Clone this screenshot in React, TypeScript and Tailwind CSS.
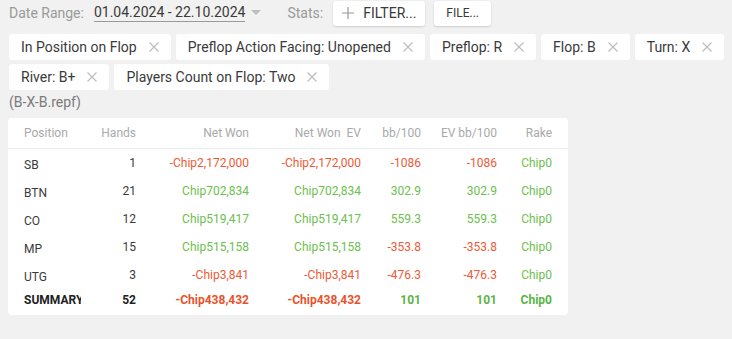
import React from 'react';

const chips = [
  ['In Position on Flop', 'Preflop Action Facing: Unopened', 'Preflop: R', 'Flop: B', 'Turn: X'],
  ['River: B+', 'Players Count on Flop: Two'],
];

type Row = {
  pos: string;
  hands: string;
  net: string;
  ev: string;
  bb: string;
  evbb: string;
};

const rows: Row[] = [
  { pos: 'SB', hands: '1', net: '-Chip2,172,000', ev: '-Chip2,172,000', bb: '-1086', evbb: '-1086' },
  { pos: 'BTN', hands: '21', net: 'Chip702,834', ev: 'Chip702,834', bb: '302.9', evbb: '302.9' },
  { pos: 'CO', hands: '12', net: 'Chip519,417', ev: 'Chip519,417', bb: '559.3', evbb: '559.3' },
  { pos: 'MP', hands: '15', net: 'Chip515,158', ev: 'Chip515,158', bb: '-353.8', evbb: '-353.8' },
  { pos: 'UTG', hands: '3', net: '-Chip3,841', ev: '-Chip3,841', bb: '-476.3', evbb: '-476.3' },
];

const tone = (v: string) => (v.startsWith('-') ? 'text-[#ee5a36]' : 'text-[#6cc04e]');

function Chip({ label }: { label: string }) {
  return (
    <div className="flex h-[26px] items-center gap-[12px] rounded-[3px] bg-white pl-[12px] pr-[12px] text-[14px] text-[#3a3a3a]">
      <span>{label}</span>
      <svg width="10" height="10" viewBox="0 0 10 10" className="text-[#bdbdbd]">
        <path d="M0.5 0.5L9.5 9.5M9.5 0.5L0.5 9.5" stroke="currentColor" strokeWidth="1.2" />
      </svg>
    </div>
  );
}

export default function App() {
  const cols = 'grid grid-cols-[57px_55px_113px_112px_60px_76px_55px]';
  return (
    <div className="min-h-[339px] w-[732px] bg-[#f1f1f1] pl-[9px] font-['Roboto',sans-serif]">
      <div className="flex h-[26px] items-center text-[14px]">
        <span className="text-[#9a9a9a]">Date Range:</span>
        <span className="ml-[10px] border-b border-[#9a9a9a] leading-[17px] text-[#3a3a3a]">01.04.2024 - 22.10.2024</span>
        <svg width="10" height="6" viewBox="0 0 10 6" className="ml-[6px] text-[#bdbdbd]">
          <path d="M0 0H10L5 5Z" fill="currentColor" />
        </svg>
        <span className="ml-[26px] text-[#9a9a9a]">Stats:</span>
        <button className="ml-[10px] flex h-[25px] items-center gap-[9px] rounded-[3px] bg-white px-[9px] text-[14px] text-[#3a3a3a] shadow-[0_1px_2px_rgba(0,0,0,0.15)]">
          <svg width="12" height="12" viewBox="0 0 12 12" className="text-[#9a9a9a]">
            <path d="M6 0V12M0 6H12" stroke="currentColor" strokeWidth="1.2" />
          </svg>
          FILTER...
        </button>
        <button className="ml-[9px] flex h-[25px] items-center rounded-[3px] bg-white px-[12px] text-[12px] text-[#3a3a3a] shadow-[0_1px_2px_rgba(0,0,0,0.15)]">
          FILE...
        </button>
      </div>
      <div className="mt-[8px] flex flex-col gap-[4px]">
        {chips.map((line, i) => (
          <div key={i} className="flex gap-[5px]">
            {line.map((c) => (
              <Chip key={c} label={c} />
            ))}
          </div>
        ))}
      </div>
      <div className="mt-[2px] text-[14px] leading-[20px] text-[#7a7a7a]">(B-X-B.repf)</div>
      <div className="-ml-[1px] mt-[6px] w-[560px] rounded-[4px] bg-white pb-[4px] text-[12px]">
        <div className={`${cols} h-[31px] items-center border-b border-[#ececec] px-[16px] text-[#a9a9a9]`}>
          <span className="whitespace-nowrap">Position</span>
          <span className="text-right">Hands</span>
          <span className="text-right">Net Won</span>
          <span className="text-right">Net Won&nbsp;&nbsp;EV</span>
          <span className="text-right">bb/100</span>
          <span className="text-right">EV bb/100</span>
          <span className="text-right">Rake</span>
        </div>
        <div>
          {rows.map((r) => (
            <div key={r.pos} className={`${cols} h-[28px] items-center px-[16px]`}>
              <span className="pt-[3px] text-[#3a3a3a]">{r.pos}</span>
              <span className="text-right text-[#3a3a3a]">{r.hands}</span>
              <span className={`text-right ${tone(r.net)}`}>{r.net}</span>
              <span className={`text-right ${tone(r.ev)}`}>{r.ev}</span>
              <span className={`text-right ${tone(r.bb)}`}>{r.bb}</span>
              <span className={`text-right ${tone(r.evbb)}`}>{r.evbb}</span>
              <span className="text-right text-[#6cc04e]">Chip0</span>
            </div>
          ))}
          <div className={`${cols} h-[22px] items-center px-[16px] font-bold`}>
            <span className="overflow-hidden whitespace-nowrap text-[#222]">SUMMARY</span>
            <span className="text-right text-[#222]">52</span>
            <span className="text-right text-[#e8532d]">-Chip438,432</span>
            <span className="text-right text-[#e8532d]">-Chip438,432</span>
            <span className="text-right text-[#5bb546]">101</span>
            <span className="text-right text-[#5bb546]">101</span>
            <span className="text-right text-[#5bb546]">Chip0</span>
          </div>
        </div>
      </div>
    </div>
  );
}
